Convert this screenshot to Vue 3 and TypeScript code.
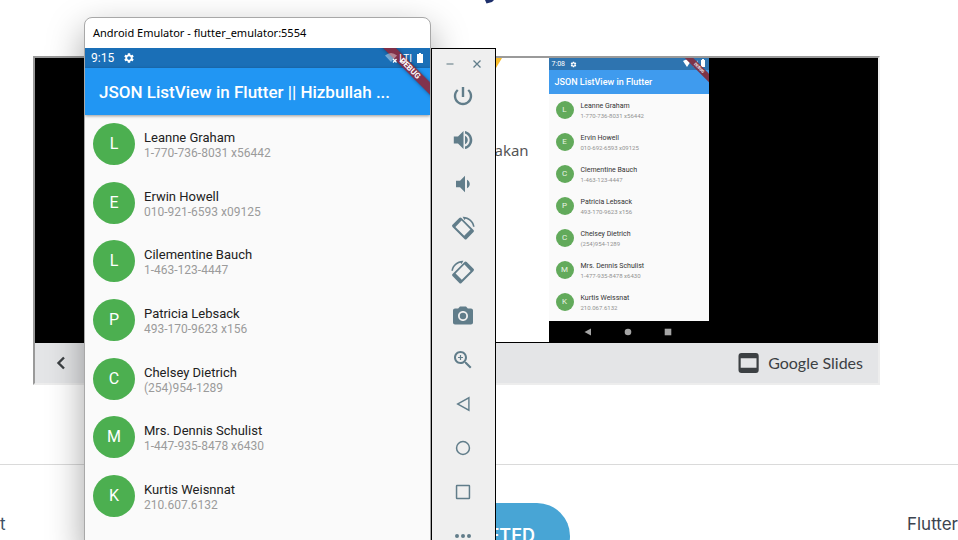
<script setup lang="ts">
interface Contact {
  initial: string
  name: string
  phone: string
}

const contacts: Contact[] = [
  { initial: 'L', name: 'Leanne Graham', phone: '1-770-736-8031 x56442' },
  { initial: 'E', name: 'Erwin Howell', phone: '010-921-6593 x09125' },
  { initial: 'L', name: 'Cilementine Bauch', phone: '1-463-123-4447' },
  { initial: 'P', name: 'Patricia Lebsack', phone: '493-170-9623 x156' },
  { initial: 'C', name: 'Chelsey Dietrich', phone: '(254)954-1289' },
  { initial: 'M', name: 'Mrs. Dennis Schulist', phone: '1-447-935-8478 x6430' },
  { initial: 'K', name: 'Kurtis Weisnnat', phone: '210.607.6132' },
]

const slideContacts: Contact[] = [
  { initial: 'L', name: 'Leanne Graham', phone: '1-770-736-8031 x56442' },
  { initial: 'E', name: 'Ervin Howell', phone: '010-692-6593 x09125' },
  { initial: 'C', name: 'Clementine Bauch', phone: '1-463-123-4447' },
  { initial: 'P', name: 'Patricia Lebsack', phone: '493-170-9623 x156' },
  { initial: 'C', name: 'Chelsey Dietrich', phone: '(254)954-1289' },
  { initial: 'M', name: 'Mrs. Dennis Schulist', phone: '1-477-935-8478 x6430' },
  { initial: 'K', name: 'Kurtis Weissnat', phone: '210.067.6132' },
]

const gear =
  'M19.14 12.94c.04-.3.06-.61.06-.94 0-.32-.02-.64-.07-.94l2.03-1.58c.18-.14.23-.41.12-.61l-1.92-3.32c-.12-.22-.37-.29-.59-.22l-2.39.96c-.5-.38-1.03-.7-1.62-.94l-.36-2.54c-.04-.24-.24-.41-.48-.41h-3.84c-.24 0-.43.17-.47.41l-.36 2.54c-.59.24-1.13.57-1.62.94l-2.39-.96c-.22-.08-.47 0-.59.22L2.74 8.87c-.12.21-.08.47.12.61l2.03 1.58c-.05.3-.09.63-.09.94s.02.64.07.94l-2.03 1.58c-.18.14-.23.41-.12.61l1.92 3.32c.12.22.37.29.59.22l2.39-.96c.5.38 1.03.7 1.62.94l.36 2.54c.05.24.24.41.48.41h3.84c.24 0 .44-.17.47-.41l.36-2.54c.59-.24 1.13-.56 1.62-.94l2.39.96c.22.08.47 0 .59-.22l1.92-3.32c.12-.22.07-.47-.12-.61l-2.01-1.58zM12 15.6c-1.98 0-3.6-1.62-3.6-3.6s1.62-3.6 3.6-3.6 3.6 1.62 3.6 3.6-1.62 3.6-3.6 3.6z'

const tools: { label: string; path: string }[] = [
  {
    label: 'Power',
    path: 'M13.2 3h-2.4v10h2.4V3zm4.83 2.17l-1.62 1.62C17.99 8 18.8 9.81 18.8 12c0 3.77-3.03 6.8-6.8 6.8S5.2 15.77 5.2 12c0-2.19.81-4 2.38-5.22L5.97 5.17C4.03 6.82 2.8 9.26 2.8 12c0 5.07 4.13 9.2 9.2 9.2s9.2-4.13 9.2-9.2c0-2.74-1.23-5.18-3.17-6.83z',
  },
  {
    label: 'Volume up',
    path: 'M2.800 8.500v7h4.200l5.500 5.500V3L7 8.500H2.800zm14 3.500c0-1.870-1.130-3.490-2.800-4.330v8.650c1.670-.83 2.800-2.450 2.800-4.320zM14 2.900v2.500c2.800.86 4.700 3.440 4.700 6.600s-1.900 5.740-4.700 6.600v2.500c4.200-.91 7.300-4.590 7.300-9.100s-3.100-8.190-7.300-9.100z',
  },
  {
    label: 'Volume down',
    path: 'M18.8 12c0-1.870-1.130-3.490-2.800-4.330v8.650c1.670-.83 2.800-2.450 2.800-4.320zM5 8.700v6.600h4l5 5V3.700L9 8.700H5z',
  },
  {
    label: 'Rotate left',
    path: 'M8.3 1.9 1.5 8.7a1.6 1.6 0 0 0 0 2.2l12 12a1.6 1.6 0 0 0 2.2 0l6.8-6.8a1.6 1.6 0 0 0 0-2.2l-12-12a1.6 1.6 0 0 0-2.2 0zM10.6 4.6 19.4 13.4 13.2 19.8 4.4 11zM11.6 0.7C17.8 0.4 23 4.900 23.6 10.7L22 10.7C21.4 7 18.6 3.8 14.600 2.800L13.400 4z',
  },
  {
    label: 'Rotate right',
    path: 'M15.7 1.9 22.5 8.7a1.6 1.6 0 0 1 0 2.2l-12 12a1.6 1.6 0 0 1-2.2 0l-6.8-6.8a1.6 1.6 0 0 1 0-2.2l12-12a1.6 1.6 0 0 1 2.2 0zM13.4 4.6 4.6 13.4 10.800 19.8 19.6 11zM12.4 0.7C6.2 0.4 1 4.900 0.4 10.7L2 10.7C2.600 7 5.400 3.800 9.400 2.800L10.600 4z',
  },
  {
    label: 'Take screenshot',
    path: 'M12 8.8a3.2 3.2 0 1 0 0 6.4 3.2 3.2 0 0 0 0-6.4zM9 2.6L7.17 4.4H4c-1.1 0-2 .9-2 2v12c0 1.1.9 2 2 2h16c1.1 0 2-.9 2-2v-12c0-1.1-.9-2-2-2h-3.17L15 2.6H9zm3 14.4c-2.76 0-5-2.24-5-5s2.24-5 5-5 5 2.24 5 5-2.24 5-5 5z',
  },
  {
    label: 'Zoom',
    path: 'M15.5 14h-.79l-.28-.27C15.41 12.59 16 11.11 16 9.5 16 5.91 13.09 3 9.5 3S3 5.91 3 9.5 5.91 16 9.5 16c1.61 0 3.09-.59 4.23-1.57l.27.28v.79l5 4.99L20.49 19l-4.99-5zm-6 0C7.01 14 5 11.99 5 9.5S7.01 5 9.5 5 14 7.01 14 9.5 11.99 14 9.5 14zM10.1 7H8.9v1.9H7v1.2h1.9V12h1.2v-1.9H12V8.9h-1.9z',
  },
  { label: 'Back', path: 'M18.600 4.6v14.8L5.200 12zM17.200 7 8.100 12l9.100 5z' },
  {
    label: 'Home',
    path: 'M12 4.8a7.2 7.2 0 1 0 0 14.4 7.2 7.2 0 0 0 0-14.4zM12 6.3a5.7 5.7 0 1 1 0 11.4 5.7 5.7 0 0 1 0-11.4z',
  },
  {
    label: 'Overview',
    path: 'M6 4.8h12a1.2 1.2 0 0 1 1.2 1.2v12a1.2 1.2 0 0 1-1.2 1.2H6A1.2 1.2 0 0 1 4.8 18V6A1.2 1.2 0 0 1 6 4.8zM6.3 6.3v11.4h11.4V6.3z',
  },
  {
    label: 'More',
    path: 'M6 10a2 2 0 1 0 0 4 2 2 0 0 0 0-4zM12 10a2 2 0 1 0 0 4 2 2 0 0 0 0-4zM18 10a2 2 0 1 0 0 4 2 2 0 0 0 0-4z',
  },
]
</script>

<template>
  <div class="desktop">
    <main class="page">
      <header class="page-head">
        <svg class="head-mark" viewBox="0 0 10 4" aria-hidden="true"><path d="M0 0h9L7 2 1.5 3.5z" fill="#1d2f6b" /></svg>
      </header>

      <section class="embed">
        <div class="stage">
          <div class="slide">
            <svg class="slide-art" viewBox="0 0 72 60" aria-hidden="true">
              <path d="M0 0h72L66 10 60 20H0z" fill="#f9bd2b" />
              <path d="M0 30h20v30H0z" fill="#3fa2ee" />
            </svg>
            <p class="slide-text">akan</p>
            <div class="mini">
              <div class="mini-status">
                <span>7:08</span>
                <svg class="mini-gear" viewBox="0 0 24 24" aria-hidden="true"><path :d="gear" fill="#fff" /></svg>
                <svg class="mini-signal" viewBox="0 0 24 10" aria-hidden="true">
                  <path d="M1 2Q5-1 9 2L5 8z" fill="#fff" />
                  <path d="M16 1v7h-5z" fill="#9db9d4" />
                  <path d="M19 1h1V0h2v1h1v7h-4z" fill="#fff" />
                </svg>
              </div>
              <div class="mini-bar">JSON ListView in Flutter</div>
              <div class="mini-ribbon">DEBUG</div>
              <ul class="mini-list">
                <li v-for="c in slideContacts" :key="c.name" class="mini-row">
                  <span class="mini-avatar">{{ c.initial }}</span>
                  <span class="mini-info">
                    <span class="mini-name">{{ c.name }}</span>
                    <span class="mini-phone">{{ c.phone }}</span>
                  </span>
                </li>
              </ul>
              <div class="mini-nav">
                <svg viewBox="0 0 8 8" aria-hidden="true"><path d="M7 0.5v7L0.5 4z" fill="#a5a5a5" /></svg>
                <svg viewBox="0 0 8 8" aria-hidden="true"><circle cx="4" cy="4" r="3.3" fill="#a5a5a5" /></svg>
                <svg viewBox="0 0 8 8" aria-hidden="true"><path d="M.7.7h6.6v6.6H.7z" fill="#a5a5a5" /></svg>
              </div>
            </div>
          </div>
        </div>
        <div class="embed-bar">
          <button class="prev" type="button" aria-label="Previous slide">
            <svg viewBox="0 0 12 16" aria-hidden="true"><path d="M9 2.5 3.5 8 9 13.5" fill="none" stroke="#3c4043" stroke-width="2.4" /></svg>
          </button>
          <a class="slides-link" href="#">
            <svg viewBox="0 0 22 22" aria-hidden="true">
              <path fill="#3c4043" fill-rule="evenodd" d="M3.5 1h14A3 3 0 0 1 20.7 4v14a3 3 0 0 1-3.2 3h-14A3 3 0 0 1 .5 18V4A3 3 0 0 1 3.5 1zM2.700 6.300v9.400h15.800V6.300z" />
            </svg>
            <span>Google Slides</span>
          </a>
        </div>
      </section>

      <footer class="lesson-nav">
        <a class="lesson-prev" href="#">t</a>
        <button class="complete" type="button">COMPLETED</button>
        <a class="lesson-next" href="#">Flutter</a>
      </footer>
    </main>

    <section class="emulator">
      <h1 class="emu-title">Android Emulator - flutter_emulator:5554</h1>
      <div class="screen">
        <div class="status">
          <span>9:15</span>
          <svg class="gear" viewBox="0 0 24 24" aria-hidden="true"><path :d="gear" fill="#fff" /></svg>
          <span class="signal">
            <svg class="wifi" viewBox="0 0 14 12" aria-hidden="true">
              <path d="M0 3.5Q6-1.5 12 3.5L6 10z" fill="#fff" fill-opacity="0.4" />
              <path d="m8 7 3.5 3.5M11.5 7 8 10.5" stroke="#fff" stroke-width="1.3" />
            </svg>
            <span class="lte">LTI</span>
            <svg class="battery" viewBox="0 0 6 10" aria-hidden="true"><path d="M0 1h2V0h2v1h2v9H0z" fill="#fff" /></svg>
          </span>
        </div>
        <div class="app-bar"><h2>JSON ListView in Flutter || Hizbullah ...</h2></div>
        <div class="ribbon">DEBUG</div>
        <ul class="list">
          <li v-for="c in contacts" :key="c.name" class="row">
            <span class="avatar">{{ c.initial }}</span>
            <span class="info">
              <span class="name">{{ c.name }}</span>
              <span class="phone">{{ c.phone }}</span>
            </span>
          </li>
        </ul>
      </div>
    </section>

    <aside class="toolbar">
      <div class="window-buttons">
        <button type="button" aria-label="Minimize">
          <svg viewBox="0 0 10 10" aria-hidden="true"><path d="M1.5 5h7" stroke="#7e9199" stroke-width="1.3" /></svg>
        </button>
        <button type="button" aria-label="Close">
          <svg viewBox="0 0 10 10" aria-hidden="true"><path d="m1.5 1.5 7 7M8.5 1.5l-7 7" stroke="#617d8a" stroke-width="1.3" /></svg>
        </button>
      </div>
      <button v-for="t in tools" :key="t.label" class="tool" type="button" :aria-label="t.label">
        <svg viewBox="0 0 24 24" aria-hidden="true"><path :d="t.path" fill="#617d8a" fill-rule="evenodd" /></svg>
      </button>
    </aside>
  </div>
</template>

<style>
body {
  background: #fff;
  overflow: hidden;
}
</style>

<style scoped>
.desktop {
  position: relative;
  height: 100vh;
  overflow: hidden;
  font-family: Roboto, "Liberation Sans", sans-serif;
}
svg {
  display: block;
}
button {
  border: 0;
  padding: 0;
  background: none;
}
a {
  text-decoration: none;
}
ul {
  list-style: none;
  margin: 0;
}

/* course page */
.page {
  display: flex;
  flex-direction: column;
}
.page-head {
  height: 56px;
}
.head-mark {
  width: 10px;
  height: 4px;
  margin: 0 auto;
  padding-left: 22px;
}
.embed {
  margin: 0 78px 0 33px;
  border: 2px solid #ededed;
  border-top-color: #9a9a9a;
  border-left-color: #9a9a9a;
}
.stage {
  display: flex;
  justify-content: center;
  padding-right: 2px;
  background: #000;
}
.slide {
  display: flex;
  width: 506px;
  background: #fff;
  border-bottom: 1px solid #000;
}
.slide-art {
  width: 72px;
  height: 60px;
  margin-left: 227px;
}
.slide-text {
  flex: 1;
  margin: 82px 0 0 -7px;
  font: 15px/20px "Noto Sans", sans-serif;
  color: #555;
}
.mini {
  position: relative;
  display: flex;
  flex-direction: column;
  width: 160px;
  overflow: hidden;
  background: #fafafa;
}
.mini-status {
  display: flex;
  align-items: center;
  height: 12px;
  padding: 0 3px;
  background: #2e74b0;
  color: #fff;
  font-size: 7px;
}
.mini-gear {
  width: 7px;
  height: 7px;
  margin-left: 5px;
}
.mini-signal {
  width: 24px;
  height: 10px;
  margin-left: auto;
}
.mini-bar {
  height: 24px;
  padding-left: 6px;
  background: #3f9bee;
  color: #fff;
  font-size: 9px;
  font-weight: 500;
  line-height: 24px;
}
.mini-ribbon {
  position: absolute;
  top: 7px;
  right: -16px;
  width: 52px;
  transform: rotate(45deg);
  background: #7c3448;
  color: #fff;
  font-size: 4px;
  font-weight: 700;
  line-height: 6px;
  text-align: center;
}
.mini-list {
  padding: 0 0 3px;
}
.mini-row {
  display: flex;
  align-items: center;
  gap: 7px;
  height: 32px;
  padding-left: 7px;
}
.mini-avatar {
  width: 18px;
  height: 18px;
  border-radius: 50%;
  background: #62aa5b;
  color: #e8f4e6;
  font-size: 8px;
  line-height: 18px;
  text-align: center;
}
.mini-info {
  display: flex;
  flex-direction: column;
  padding-top: 2px;
  font-size: 7px;
  line-height: 9px;
}
.mini-name {
  color: #333;
}
.mini-phone {
  color: #929292;
  font-size: 6px;
}
.mini-nav {
  display: flex;
  align-items: center;
  gap: 32px;
  height: 21px;
  padding-left: 35px;
  background: #000;
}
.mini-nav svg {
  width: 8px;
  height: 8px;
}
.embed-bar {
  display: flex;
  align-items: center;
  justify-content: space-between;
  height: 40px;
  padding: 0 15px 0 20px;
  background: #e4e5e7;
}
.prev svg {
  width: 12px;
  height: 16px;
}
.slides-link {
  display: flex;
  align-items: center;
  gap: 8px;
  color: #3c4043;
  font: 16px/20px Lato, sans-serif;
}
.slides-link svg {
  width: 22px;
  height: 22px;
}
.lesson-nav {
  display: grid;
  grid-template-columns: 1fr auto 1fr;
  margin-top: 79px;
  padding-top: 38px;
  border-top: 1px solid #dadada;
  font: 17px/42px Inter, sans-serif;
}
.lesson-prev {
  color: #3c5064;
}
.lesson-next {
  justify-self: end;
  color: #3c4450;
}
.complete {
  height: 66px;
  padding: 0 35px;
  border-radius: 33px;
  background: #48a5d5;
  color: #fff;
  font: 600 18px/66px Inter, sans-serif;
}

/* emulator window */
.emulator {
  position: absolute;
  top: 17px;
  bottom: -8px;
  left: 84px;
  display: flex;
  flex-direction: column;
  width: 345px;
  border: 1px solid #a8a8a8;
  border-radius: 8px 8px 0 0;
  background: #fff;
  box-shadow: 0 14px 36px rgba(0, 0, 0, 0.36);
}
.emu-title {
  margin: 0;
  padding-left: 8px;
  color: #000;
  font: 11px/30px "Noto Sans", sans-serif;
}
.screen {
  position: relative;
  display: flex;
  flex: 1;
  flex-direction: column;
  overflow: hidden;
  background: #fafafa;
}
.status {
  display: flex;
  align-items: center;
  height: 20px;
  padding: 0 7px 0 6px;
  background: #1a6fb7;
  color: #fff;
  font-size: 12px;
}
.gear {
  width: 12px;
  height: 12px;
  margin-left: 9px;
}
.signal {
  position: relative;
  z-index: 1;
  display: flex;
  align-items: center;
  margin-left: auto;
}
.wifi {
  width: 14px;
  height: 12px;
}
.lte {
  margin-right: 5px;
  font-size: 10px;
}
.battery {
  width: 6px;
  height: 10px;
}
.app-bar {
  padding: 2px 14px 0;
  background: #2196f3;
  box-shadow: 0 1px 3px rgba(0, 0, 0, 0.4);
}
.app-bar h2 {
  margin: 0;
  color: #fff;
  font-size: 17px;
  font-weight: 500;
  line-height: 45px;
  white-space: nowrap;
}
.ribbon {
  position: absolute;
  top: 16px;
  right: -30px;
  width: 100px;
  transform: rotate(45deg);
  background: rgba(140, 40, 60, 0.9);
  box-shadow: 0 0 4px rgba(0, 0, 0, 0.4);
  color: #fff;
  font-size: 8px;
  font-weight: 700;
  line-height: 9px;
  text-align: center;
}
.list {
  display: flex;
  flex: 1;
  flex-direction: column;
  justify-content: space-between;
  padding: 8px 8px 30px;
}
.row {
  display: flex;
  align-items: center;
  gap: 9px;
}
.avatar {
  width: 42px;
  height: 42px;
  border-radius: 50%;
  background: #4caf50;
  color: #fff;
  font-size: 16px;
  line-height: 42px;
  text-align: center;
}
.info {
  display: flex;
  flex-direction: column;
  padding-top: 2px;
}
.name {
  color: #212121;
  font-size: 13px;
  line-height: 16px;
}
.phone {
  color: #9b9b9b;
  font-size: 12px;
  line-height: 14px;
}

/* emulator controls */
.toolbar {
  position: absolute;
  top: 48px;
  bottom: -20px;
  left: 431px;
  display: flex;
  flex-direction: column;
  width: 63px;
  border: 1px solid #000;
  background: #efefef;
}
.window-buttons {
  display: flex;
  gap: 17px;
  height: 25px;
  padding: 0 13px;
}
.window-buttons svg {
  width: 10px;
  height: 10px;
  margin-top: 4px;
}
.tool {
  display: grid;
  flex: none;
  place-items: center;
  height: 44px;
  padding-right: 2px;
}
.tool svg {
  width: 24px;
  height: 24px;
}
</style>
